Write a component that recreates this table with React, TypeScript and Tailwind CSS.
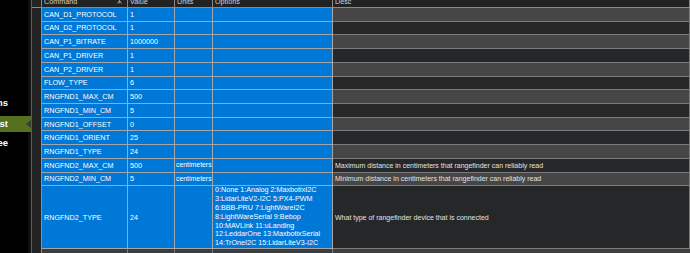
import React from "react"

interface Param {
  name: string
  value: string
  units?: string
  options?: string[]
  desc?: string
}

const params: Param[] = [
  { name: "CAN_D1_PROTOCOL", value: "1" },
  { name: "CAN_D2_PROTOCOL", value: "1" },
  { name: "CAN_P1_BITRATE", value: "1000000" },
  { name: "CAN_P1_DRIVER", value: "1" },
  { name: "CAN_P2_DRIVER", value: "1" },
  { name: "FLOW_TYPE", value: "6" },
  { name: "RNGFND1_MAX_CM", value: "500" },
  { name: "RNGFND1_MIN_CM", value: "5" },
  { name: "RNGFND1_OFFSET", value: "0" },
  { name: "RNGFND1_ORIENT", value: "25" },
  { name: "RNGFND1_TYPE", value: "24" },
  {
    name: "RNGFND2_MAX_CM",
    value: "500",
    units: "centimeters",
    desc: "Maximum distance in centimeters that rangefinder can reliably read",
  },
  {
    name: "RNGFND2_MIN_CM",
    value: "5",
    units: "centimeters",
    desc: "Minimum distance in centimeters that rangefinder can reliably read",
  },
  {
    name: "RNGFND2_TYPE",
    value: "24",
    options: [
      "0:None 1:Analog 2:MaxbotixI2C",
      "3:LidarLiteV2-I2C 5:PX4-PWM",
      "6:BBB-PRU 7:LightWareI2C",
      "8:LightWareSerial 9:Bebop",
      "10:MAVLink 11:uLanding",
      "12:LeddarOne 13:MaxbotixSerial",
      "14:TrOneI2C 15:LidarLiteV3-I2C",
    ],
    desc: "What type of rangefinder device that is connected",
  },
]

const menu = [
  { label: "User Params", active: false },
  { label: "Full Parameter List", active: true },
  { label: "Full Parameter Tree", active: false },
]

const cell = "flex items-center overflow-hidden whitespace-nowrap border-r border-b"
const selected = "bg-[#0078d7] border-[#a3a7ab] text-white"

export default function App() {
  return (
    <div className="flex w-[690px] h-[253px] overflow-hidden bg-black font-['Liberation_Sans',Arial,sans-serif]">
      {/* Config menu, clipped */}
      <div className="w-[31px] shrink-0 overflow-hidden bg-[linear-gradient(to_right,#000_88%,#1c1c1c)] pt-[95px] flex flex-col">
        {menu.map((item, i) => (
          <div
            key={item.label}
            className={
              "relative h-[16px] flex items-center justify-end pr-[23px] whitespace-nowrap text-[9.5px] font-bold text-white " +
              (i === 1 ? "mt-[5px] " : "") +
              (i === 2 ? "mt-[3px] " : "") +
              (item.active ? "bg-[#56701d]" : "")
            }
          >
            {item.label}
            {item.active && (
              <span className="absolute right-0 top-1/2 -translate-y-1/2 border-y-[4px] border-y-transparent border-r-[5px] border-r-[#3c3c3c]" />
            )}
          </div>
        ))}
      </div>

      {/* Parameter grid */}
      <div className="flex-1 border-l border-[#5a5a5a] text-[7.2px] leading-none">
        {/* Header */}
        <div className="grid grid-cols-[10px_86px_47px_38px_120px_1fr] h-[8px] bg-[#222222] text-[#cfcfcf]">
          <div className="border-r border-b border-[#8a8a8a] bg-[#232323]" />
          {["Command", "Value", "Units", "Options", "Desc"].map((h) => (
            <div key={h} className="relative overflow-hidden border-r border-b border-[#8a8a8a] pl-[2px]">
              <div className="-mt-[3px] leading-[10px]">{h}</div>
              {h === "Command" && (
                <svg className="absolute right-[5px] top-0" width="5" height="4" viewBox="0 0 5 4">
                  <path d="M0.5 3.5 L2.5 0.5 L4.5 3.5" fill="none" stroke="#bdbdbd" strokeWidth="0.8" />
                  <path d="M2.5 0.5 V3.5" stroke="#bdbdbd" strokeWidth="0.6" />
                </svg>
              )}
            </div>
          ))}
        </div>

        {/* Rows */}
        {params.map((p, i) => {
          const tall = !!p.options
          const h = tall ? "h-[62.6px]" : "h-[13.72px]"
          const descBg = i % 2 === 0 ? "bg-[#464646]" : "bg-[#262729]"
          return (
            <div key={p.name} className={"grid grid-cols-[10px_86px_47px_38px_120px_1fr] " + h}>
              <div className="bg-[#232323] border-r border-[#8f8f8f]" />
              <div className={cell + " " + selected + " pl-[2px]"}>{p.name}</div>
              <div className={cell + " " + selected + " pl-[2px]"}>{p.value}</div>
              <div className={cell + " " + selected + " pl-[1px] text-[6.9px]"}>{p.units}</div>
              <div className={cell + " " + selected + " pl-[2px]"}>
                {p.options && (
                  <div className="leading-[8.8px]">
                    {p.options.map((o) => (
                      <div key={o}>{o}</div>
                    ))}
                  </div>
                )}
              </div>
              <div className={cell + " " + descBg + " border-[#7c7c7c] pl-[2px] text-[7px] text-[#e2e2e2]"}>
                {p.desc}
              </div>
            </div>
          )
        })}

        {/* Next, unselected row (cut off) */}
        <div className="grid grid-cols-[10px_86px_47px_38px_120px_1fr] h-[13.72px]">
          <div className="bg-[#232323] border-r border-[#8f8f8f]" />
          <div className="bg-[#3c3c3c] border-r border-[#7c7c7c]" />
          <div className="bg-[#3c3c3c] border-r border-[#7c7c7c]" />
          <div className="bg-[#3c3c3c] border-r border-[#7c7c7c]" />
          <div className="bg-[#3c3c3c] border-r border-[#7c7c7c]" />
          <div className="bg-[#3f3f3f]" />
        </div>
      </div>
    </div>
  )
}
